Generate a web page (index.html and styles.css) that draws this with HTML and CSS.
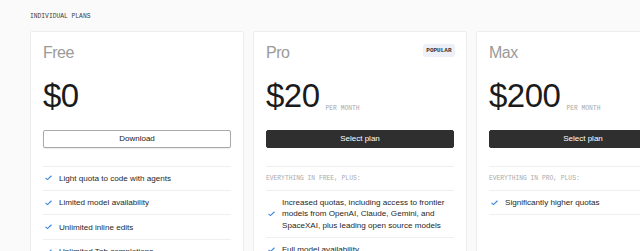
FILE: index.html
```html
<!DOCTYPE html>
<html lang="en">
<head>
<meta charset="utf-8">
<title>Plans</title>
<link rel="stylesheet" href="styles.css">
</head>
<body>
<main class="page">
  <div class="eyebrow">INDIVIDUAL PLANS</div>
  <div class="plans">
    <section class="card">
      <div class="card-head">
        <h2 class="plan-name">Free</h2>
      </div>
      <div class="price-row">
        <span class="price">$0</span>
      </div>
      <button class="btn btn-outline">Download</button>
      <ul class="features">
        <li class="feature"><svg class="check" viewBox="0 0 8 6"><path d="M0.6 3.1 L2.8 5.1 L7.4 0.7"/></svg><span>Light quota to code with agents</span></li>
        <li class="feature"><svg class="check" viewBox="0 0 8 6"><path d="M0.6 3.1 L2.8 5.1 L7.4 0.7"/></svg><span>Limited model availability</span></li>
        <li class="feature"><svg class="check" viewBox="0 0 8 6"><path d="M0.6 3.1 L2.8 5.1 L7.4 0.7"/></svg><span>Unlimited inline edits</span></li>
        <li class="feature"><svg class="check" viewBox="0 0 8 6"><path d="M0.6 3.1 L2.8 5.1 L7.4 0.7"/></svg><span>Unlimited Tab completions</span></li>
      </ul>
    </section>
    <section class="card">
      <div class="card-head">
        <h2 class="plan-name">Pro</h2>
        <span class="badge">POPULAR</span>
      </div>
      <div class="price-row">
        <span class="price">$20</span>
        <span class="per">PER MONTH</span>
      </div>
      <button class="btn btn-dark">Select plan</button>
      <ul class="features">
        <li class="feature-head">EVERYTHING IN FREE, PLUS:</li>
        <li class="feature"><svg class="check" viewBox="0 0 8 6"><path d="M0.6 3.1 L2.8 5.1 L7.4 0.7"/></svg><span>Increased quotas, including access to frontier models from OpenAI, Claude, Gemini, and SpaceXAI, plus leading open source models</span></li>
        <li class="feature"><svg class="check" viewBox="0 0 8 6"><path d="M0.6 3.1 L2.8 5.1 L7.4 0.7"/></svg><span>Full model availability</span></li>
      </ul>
    </section>
    <section class="card">
      <div class="card-head">
        <h2 class="plan-name">Max</h2>
      </div>
      <div class="price-row">
        <span class="price">$200</span>
        <span class="per">PER MONTH</span>
      </div>
      <button class="btn btn-dark">Select plan</button>
      <ul class="features">
        <li class="feature-head">EVERYTHING IN PRO, PLUS:</li>
        <li class="feature"><svg class="check" viewBox="0 0 8 6"><path d="M0.6 3.1 L2.8 5.1 L7.4 0.7"/></svg><span>Significantly higher quotas</span></li>
      </ul>
    </section>
  </div>
</main>
</body>
</html>
```
FILE: styles.css
```css
* { box-sizing: border-box; }
html, body {
  margin: 0;
  padding: 0;
  background: #fafafa;
  overflow: hidden;
  height: 251px;
}
body {
  font-family: "Liberation Sans", Arial, sans-serif;
  color: #222;
}
.page {
  padding: 13px 0 0 30px;
}
.eyebrow {
  font-family: "Liberation Mono", monospace;
  font-size: 6.3px;
  line-height: 8px;
  color: #3a3a3a;
  height: 8px;
  margin-bottom: 10px;
}
.plans {
  display: flex;
  gap: 9px;
}
.card {
  flex: 0 0 214px;
  background: #fff;
  border: 1px solid #ededed;
  border-radius: 2px;
  padding: 11px 12px 20px;
  height: 260px;
}
.card-head {
  display: flex;
  justify-content: space-between;
  align-items: flex-start;
  height: 20px;
}
.plan-name {
  margin: 0;
  font-size: 16px;
  line-height: 20px;
  font-weight: 400;
  letter-spacing: -0.5px;
  color: #9a9a9a;
}
.badge {
  margin-top: 1px;
  margin-right: -1px;
  background: #eef0f9;
  border-radius: 3px;
  font-family: "Liberation Mono", monospace;
  font-weight: 700;
  font-size: 6px;
  line-height: 13px;
  padding: 0 3.5px;
  color: #333;
}
.price-row {
  display: flex;
  align-items: flex-end;
  gap: 6px;
  margin-top: 16px;
  height: 33px;
}
.price {
  font-size: 33px;
  line-height: 33px;
  color: #1b1b1b;
  letter-spacing: -0.5px;
}
.per {
  font-family: "Liberation Mono", monospace;
  font-size: 6.3px;
  line-height: 8px;
  color: #a8a8a8;
  margin-bottom: -1px;
}
.btn {
  display: block;
  width: 100%;
  height: 17.5px;
  margin-top: 18px;
  font-family: "Liberation Sans", Arial, sans-serif;
  font-size: 8px;
  border-radius: 2px;
  padding: 0;
}
.btn-outline {
  background: #fff;
  border: 1px solid #a9a9a9;
  color: #222;
  box-shadow: 0 1px 1px rgba(0,0,0,0.08);
}
.btn-dark {
  background: #2f2f2f;
  border: 1px solid #2f2f2f;
  color: #fff;
}
.features {
  list-style: none;
  margin: 18px 0 0;
  padding: 0;
  border-top: 1px solid #efefef;
}
.feature-head {
  font-family: "Liberation Mono", monospace;
  font-size: 6.3px;
  line-height: 11.3px;
  padding: 6.1px 0;
  color: #aaa;
  border-bottom: 1px solid #efefef;
}
.feature {
  display: flex;
  align-items: center;
  gap: 7px;
  padding: 6.1px 0 6.1px 2px;
  font-size: 8.1px;
  line-height: 11.3px;
  color: #1f1f1f;
  border-bottom: 1px solid #efefef;
}
.check {
  flex: 0 0 7px;
  width: 7px;
  height: 5.5px;
  fill: none;
  stroke: #3b86dc;
  stroke-width: 1.25;
}
```
